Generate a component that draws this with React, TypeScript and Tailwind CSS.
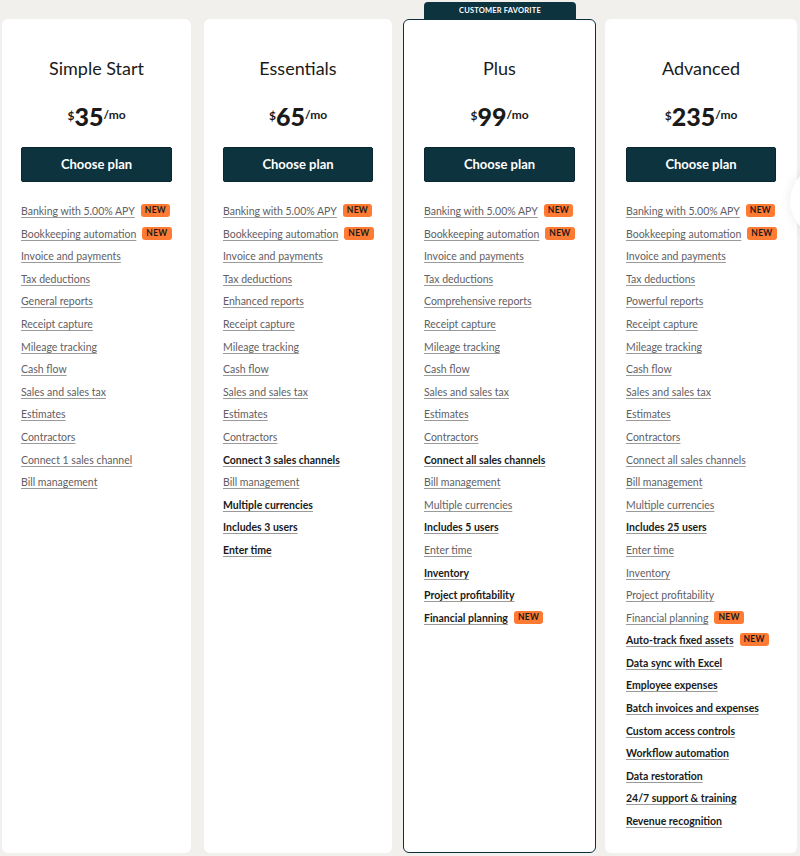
import React from 'react';

type Feature = { label: string; bold?: boolean; isNew?: boolean };

const f = (label: string, bold = false, isNew = false): Feature => ({ label, bold, isNew });

const plans = [
  {
    name: 'Simple Start',
    price: '35',
    box: 'w-[189px] px-[19px]',
    features: [
      f('Banking with 5.00% APY', false, true),
      f('Bookkeeping automation', false, true),
      f('Invoice and payments'),
      f('Tax deductions'),
      f('General reports'),
      f('Receipt capture'),
      f('Mileage tracking'),
      f('Cash flow'),
      f('Sales and sales tax'),
      f('Estimates'),
      f('Contractors'),
      f('Connect 1 sales channel'),
      f('Bill management'),
    ],
  },
  {
    name: 'Essentials',
    price: '65',
    box: 'ml-[13px] w-[188px] px-[19px]',
    features: [
      f('Banking with 5.00% APY', false, true),
      f('Bookkeeping automation', false, true),
      f('Invoice and payments'),
      f('Tax deductions'),
      f('Enhanced reports'),
      f('Receipt capture'),
      f('Mileage tracking'),
      f('Cash flow'),
      f('Sales and sales tax'),
      f('Estimates'),
      f('Contractors'),
      f('Connect 3 sales channels', true),
      f('Bill management'),
      f('Multiple currencies', true),
      f('Includes 3 users', true),
      f('Enter time', true),
    ],
  },
  {
    name: 'Plus',
    price: '99',
    favorite: true,
    box: 'ml-[11px] w-[193px] px-[20px]',
    features: [
      f('Banking with 5.00% APY', false, true),
      f('Bookkeeping automation', false, true),
      f('Invoice and payments'),
      f('Tax deductions'),
      f('Comprehensive reports'),
      f('Receipt capture'),
      f('Mileage tracking'),
      f('Cash flow'),
      f('Sales and sales tax'),
      f('Estimates'),
      f('Contractors'),
      f('Connect all sales channels', true),
      f('Bill management'),
      f('Multiple currencies'),
      f('Includes 5 users', true),
      f('Enter time'),
      f('Inventory', true),
      f('Project profitability', true),
      f('Financial planning', true, true),
    ],
  },
  {
    name: 'Advanced',
    price: '235',
    box: 'ml-[9px] w-[192px] px-[21px]',
    features: [
      f('Banking with 5.00% APY', false, true),
      f('Bookkeeping automation', false, true),
      f('Invoice and payments'),
      f('Tax deductions'),
      f('Powerful reports'),
      f('Receipt capture'),
      f('Mileage tracking'),
      f('Cash flow'),
      f('Sales and sales tax'),
      f('Estimates'),
      f('Contractors'),
      f('Connect all sales channels'),
      f('Bill management'),
      f('Multiple currencies'),
      f('Includes 25 users', true),
      f('Enter time'),
      f('Inventory'),
      f('Project profitability'),
      f('Financial planning', false, true),
      f('Auto-track fixed assets', true, true),
      f('Data sync with Excel', true),
      f('Employee expenses', true),
      f('Batch invoices and expenses', true),
      f('Custom access controls', true),
      f('Workflow automation', true),
      f('Data restoration', true),
      f('24/7 support & training', true),
      f('Revenue recognition', true),
    ],
  },
];

function NewBadge() {
  return (
    <span className="ml-[6px] inline-block shrink-0 rounded-[3px] bg-[#ff7a33] px-[4px] py-[1px] text-[8.5px] font-bold leading-[11px] tracking-[0.3px] text-[#1a1a1a]">
      NEW
    </span>
  );
}

export default function App() {
  return (
    <div
      className="relative h-[856px] w-[800px] overflow-hidden bg-[#f1f0ec] px-[2px] pb-[3px] pt-[19px]"
      style={{ fontFamily: 'Lato, "Noto Sans", sans-serif' }}
    >
      <div className="flex h-full">
        {plans.map((plan) => (
          <div
            key={plan.name}
            className={`relative flex shrink-0 flex-col rounded-[6px] bg-white ${plan.box} ${
              plan.favorite ? 'border border-[#0d2f3a]' : ''
            }`}
          >
            {plan.favorite && (
              <div className="absolute left-[20px] right-[19px] top-[-18px] flex h-[18px] items-center justify-center rounded-t-[4px] bg-[#0d333f] text-[7.5px] font-bold tracking-[0.2px] text-white">
                CUSTOMER FAVORITE
              </div>
            )}
            <h2
              className={`text-center text-[18px] leading-[24px] text-[#1a1a1a] ${
                plan.favorite ? 'mt-[36px]' : 'mt-[37px]'
              }`}
            >
              {plan.name}
            </h2>
            <div className="mt-[23px] flex items-start justify-center text-[#1a1a1a]">
              <span className="mt-[7px] text-[12px] font-bold leading-none">$</span>
              <span className="text-[25px] font-black leading-[26px]">{plan.price}</span>
              <span className="mt-[6px] text-[12px] font-bold leading-none">/mo</span>
            </div>
            <button className="mt-[18px] h-[35px] w-full rounded-[2px] border border-[#0a2630] bg-[#0d333f] text-[13px] font-bold text-white">
              Choose plan
            </button>
            <ul className="mt-[22px] flex flex-col">
              {plan.features.map((feat) => (
                <li key={feat.label} className="flex h-[22.6px] items-start whitespace-nowrap">
                  <span
                    className={`text-[10.5px] leading-[14px] underline underline-offset-[2px] decoration-[#9a9a9a] ${
                      feat.bold ? 'font-bold text-[#1a1a1a]' : 'text-[#5f6064]'
                    }`}
                  >
                    {feat.label}
                  </span>
                  {feat.isNew && <NewBadge />}
                </li>
              ))}
            </ul>
          </div>
        ))}
      </div>
      <div className="absolute right-[-62px] top-[165px] h-[72px] w-[72px] rounded-full bg-white shadow-[0_0_12px_rgba(0,0,0,0.08)]" />
    </div>
  );
}
